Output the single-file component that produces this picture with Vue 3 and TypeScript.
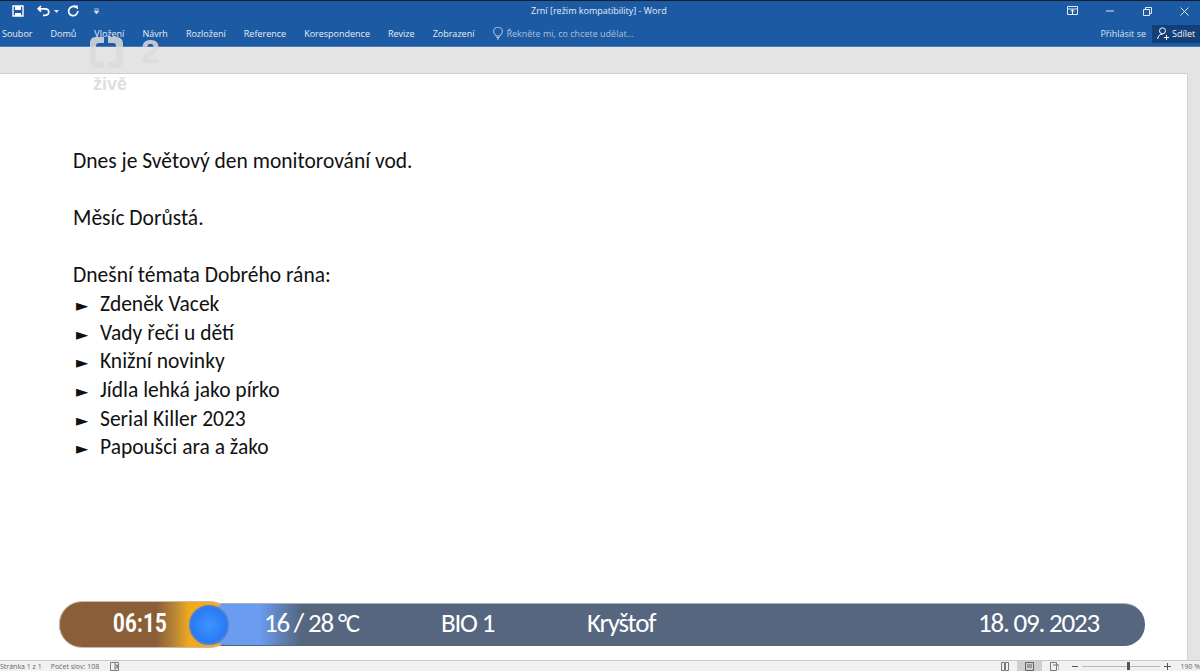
<script setup lang="ts">
const tabs: string[] = ['Soubor', 'Domů', 'Vložení', 'Návrh', 'Rozložení', 'Reference', 'Korespondence', 'Revize', 'Zobrazení']
const items: string[] = ['Zdeněk Vacek', 'Vady řeči u dětí', 'Knižní novinky', 'Jídla lehká jako pírko', 'Serial Killer 2023', 'Papoušci ara a žako']
</script>

<template>
  <div class="app">
    <header class="ribbon">
      <div class="titlerow">
        <div class="qat">
          <svg width="14" height="14" viewBox="0 0 14 14" class="save"><path d="M2 2h10v10H2z" fill="none" stroke="#fff" stroke-width="1.4"/><path d="M4 2h6v4H4z" fill="#fff"/><path d="M4 9h6v3H4z" fill="#fff"/></svg>
          <svg width="14" height="12" viewBox="0 0 14 12" class="undo"><path d="M4 1 1.2 3.8 4 6.6M1.5 3.8H8c5 0 5 6.5 0 6.5H6" fill="none" stroke="#fff" stroke-width="1.7"/></svg>
          <svg width="5" height="3" viewBox="0 0 5 3" class="caret"><path d="M0 0h5L2.5 3z" fill="#dfe8f5"/></svg>
          <svg width="12" height="12" viewBox="0 0 12 12" class="redo"><path d="M9.2 2.6A4.6 4.6 0 1 0 10.8 6" fill="none" stroke="#fff" stroke-width="1.7"/><path d="M6.2.6h4.6v4z" fill="#fff"/></svg>
          <svg width="5" height="6" viewBox="0 0 5 6" class="more"><path d="M0 1h5M0 3h5L2.5 6z" stroke="#cfdcf0" stroke-width=".8" fill="#cfdcf0"/></svg>
        </div>
        <div class="doctitle">Zrní [režim kompatibility] - Word</div>
        <div class="winctl">
          <svg width="11" height="10" viewBox="0 0 11 10" class="wopt"><path d="M.5.5h10v8H.5zM.5 3h10" fill="none" stroke="#dfe8f5"/><path d="M5.5 8V4M3.7 5.6 5.5 3.8l1.8 1.8" fill="none" stroke="#fff"/></svg>
          <svg width="9" height="2" viewBox="0 0 9 2" class="wmin"><path d="M0 1h8" stroke="#dfe8f5"/></svg>
          <svg width="9" height="9" viewBox="0 0 9 9" class="wmax"><path d="M.5 2.5h6v6h-6zM2.5 2.5v-2h6v6h-2" fill="none" stroke="#dfe8f5"/></svg>
          <svg width="9" height="9" viewBox="0 0 9 9" class="wclose"><path d="m.5.5 8 8M8.500.5l-8 8" stroke="#dfe8f5"/></svg>
        </div>
      </div>
      <div class="tabrow">
        <nav class="tabs"><span v-for="t in tabs" :key="t" class="tab">{{ t }}</span></nav>
        <div class="tell">
          <svg width="10" height="13" viewBox="0 0 10 13"><path d="M3 9C2.500 7.500.6 6.600.6 4.500a4.400 4.400 0 0 1 8.800 0C9.400 6.600 7.500 7.500 7 9zM3.500 10.500h3M4 12h2" fill="none" stroke="#cfdcf0" stroke-width=".9"/></svg>
          <span>Řekněte mi, co chcete udělat...</span>
        </div>
        <div class="account">
          <span class="login">Přihlásit se</span>
          <span class="share">
            <svg width="13" height="13" viewBox="0 0 13 13"><circle cx="5.500" cy="3.800" r="3" fill="none" stroke="#fff" stroke-width="1"/><path d="M.6 12c.3-3 2-4.800 4.900-4.800M9.500 8v5M7 10.500h5" fill="none" stroke="#fff" stroke-width="1"/></svg>
            Sdílet
          </span>
        </div>
      </div>
    </header>

    <main class="workspace">
      <section class="page">
        <p class="line">Dnes je Světový den monitorování vod.</p>
        <p class="line blank"></p>
        <p class="line">Měsíc Dorůstá.</p>
        <p class="line blank"></p>
        <p class="line">Dnešní témata Dobrého rána:</p>
        <p v-for="i in items" :key="i" class="line item"><span class="arrow">►</span>{{ i }}</p>
      </section>
    </main>

    <footer class="status">
      <div class="st-left">
        <span>Stránka 1 z 1</span><span>Počet slov: 108</span>
        <svg width="10" height="9" viewBox="0 0 10 9"><path d="M.5.5h8v8h-8zM5 .5v8M5.500 2l3 5M8.500 2l-3 5" fill="none" stroke="#666" stroke-width=".8"/></svg>
      </div>
      <div class="st-right">
        <svg width="8" height="9" viewBox="0 0 8 9"><path d="M.5.500h3v8h-3zM4.500.500h3v8h-3z" fill="none" stroke="#777"/></svg>
        <span class="viewbtn"><svg width="9" height="9" viewBox="0 0 9 9"><path d="M.5.500h8v8h-8z" fill="none" stroke="#666"/><path d="M2 3h5M2 5h5" stroke="#666"/></svg></span>
        <svg width="9" height="9" viewBox="0 0 9 9"><path d="M.5.500h6v8h-6zM3 3h6v5" fill="none" stroke="#777"/></svg>
        <span class="zoomctl"><i class="minus"></i><span class="slider"><b></b></span><i class="plus"></i></span>
        <span class="pct">190 %</span>
      </div>
    </footer>

    <!-- TV broadcast overlays -->
    <div class="logo">
      <svg width="78" height="36" viewBox="0 0 78 36"><path d="M16 2H8C3 2 2 5 2 9v16c0 5 2 8 7 8h7v-6h-5c-2 0-3-1-3-3V11c0-2 1-3 3-3h5zM20 2h8c5 0 7 3 7 7v16c0 5-2 8-7 8h-8v-6h5c2 0 3-1 3-3V11c0-2-1-3-3-3h-5z" fill="#dcdcdc" opacity=".85"/><text x="53" y="28" class="logo2">2</text></svg>
      <div class="live">živě</div>
    </div>
    <div class="tvbar">
      <div class="clock"><span>06:15</span></div>
      <div class="orb"></div>
      <div class="glow"></div>
      <span class="tv temp">16 / 28 °C</span>
      <span class="tv bio">BIO 1</span>
      <span class="tv name">Kryštof</span>
      <span class="tv date">18. 09. 2023</span>
    </div>
  </div>
</template>

<style>
html, body { margin: 0; padding: 0; background: #fff; }
</style>

<style scoped>
.app { position: relative; width: 1200px; height: 671px; overflow: hidden; display: flex; flex-direction: column; font-family: "Open Sans", "Noto Sans", sans-serif; }
.ribbon { height: 46.500px; flex: none; background: #1c5aa3; color: #eaf0f8; border-top: 1px solid #141d2b; box-sizing: border-box; border-bottom: 1px solid #4a7bb8; }
.titlerow { height: 20px; display: flex; align-items: center; position: relative; }
.qat { display: flex; align-items: center; padding-left: 11px; }
.undo { margin-left: 12px; }
.caret { margin-left: 3px; }
.redo { margin-left: 8px; }
.more { margin-left: 15px; }
.doctitle { position: absolute; left: 531px; top: 3px; font-size: 9px; line-height: 14px; color: #e8eef7; white-space: nowrap; }
.winctl { margin-left: auto; display: flex; align-items: center; padding-right: 11px; }
.wmin { margin-left: 28px; }
.wmax { margin-left: 28px; }
.wclose { margin-left: 28px; }
.tabrow { height: 25px; display: flex; align-items: center; position: relative; }
.tabs { display: flex; padding-left: 2px; font-size: 9px; color: #e6edf7; white-space: nowrap; }
.tab { margin-right: 18px; }
.tab:first-child { margin-right: 18px; }
.tell { display: flex; align-items: center; gap: 3px; margin-left: 1px; font-size: 9px; color: #a9c0de; white-space: nowrap; }
.account { margin-left: auto; display: flex; align-items: center; font-size: 9px; white-space: nowrap; }
.login { color: #dbe5f3; margin-right: 6px; }
.share { display: flex; align-items: center; gap: 2px; width: 48px; height: 18px; box-sizing: border-box; padding-left: 5px; background: #133f77; color: #f0f4fa; }
.workspace { flex: 1; background: #e4e4e4; padding: 26px 12px 0 0; display: flex; min-height: 0; }
.page { flex: 1; background: #fff; border-top: 1px solid #cfcfcf; border-right: 1px solid #d2d2d2; padding: 73px 0 0 73px; margin-bottom: -2px; box-sizing: border-box; font-family: Carlito, Lato, sans-serif; color: #111; height: 594px; }
.line { margin: 0; font-size: 21.500px; line-height: 28.700px; height: 28.700px; white-space: nowrap; }
.arrow { display: inline-block; width: 27px; font-family: "DejaVu Sans", sans-serif; font-size: 16px; padding-left: 3px; box-sizing: border-box; }
.status { height: 10px; flex: none; background: #f1f1f1; border-top: 1px solid #c8c8c8; display: flex; justify-content: space-between; align-items: center; font-size: 7px; color: #666; overflow: hidden; }
.st-left { display: flex; align-items: center; gap: 9px; padding-left: 0; }
.st-left svg { margin-left: 2px; }
.st-right { display: flex; align-items: center; gap: 9px; margin-right: 0; }
.viewbtn { width: 25px; height: 10px; background: #cfcfcf; display: flex; justify-content: center; align-items: center; margin: 0 -1px; }
.zoomctl { display: flex; align-items: center; gap: 4px; margin-left: 4px; }
.minus { width: 6px; height: 1px; background: #555; }
.plus { width: 7px; height: 7px; background: linear-gradient(#555, #555) center/7px 1px no-repeat, linear-gradient(#555, #555) center/1px 7px no-repeat; }
.slider { width: 78px; height: 1px; background: #bbb; position: relative; display: block; }
.slider b { position: absolute; left: 45px; top: -4px; width: 3px; height: 8px; background: #555; }
.pct { white-space: nowrap; }
.logo { position: absolute; left: 88px; top: 35px; width: 90px; height: 60px; }
.logo svg { display: block; }
.logo2 { font: 700 34px "Liberation Sans", sans-serif; fill: #dcdcdc; opacity: .85; }
.live { position: absolute; left: 5px; top: 39px; font: 700 18px/20px "Liberation Sans", sans-serif; color: #dedede; }
.tvbar { position: absolute; left: 59px; top: 603px; width: 1086px; height: 43px; border-radius: 21px; background: #56667f; border-top: 1px solid #aab1bd; box-sizing: border-box; color: #fff; }
.clock { position: absolute; left: 0; top: -3px; width: 174px; height: 47px; border-radius: 23px; background: linear-gradient(90deg, #8a5f38 0 56%, #b08038 65%, #f0a820 75%, #f7ad20 100%); overflow: hidden; border: 1px solid #c9bba9; box-sizing: border-box; }
.clock span { position: absolute; left: 53px; top: 5px; font: 700 25px/34px "Roboto", sans-serif; letter-spacing: .3px; color: #fff; transform: scaleX(.82); transform-origin: left; }
.glow { position: absolute; left: 150px; top: 0; width: 92px; height: 41px; background: linear-gradient(90deg, #6a9cf0 0 55%, #56667f 100%); z-index: 0; border-radius: 18px 0 0 18px; }
.orb { position: absolute; left: 130px; top: 1px; width: 36px; height: 36px; border-radius: 50%; background: radial-gradient(circle, #3e95ff 0, #2b7df5 60%, #2a70dc 85%); border: 2px solid #4b80d8; z-index: 2; }
.tv { position: absolute; top: 2px; font-family: Carlito, Lato, sans-serif; font-size: 27px; line-height: 34px; letter-spacing: -1.2px; white-space: nowrap; z-index: 3; }
.temp { left: 205px; }
.bio { left: 382px; }
.name { left: 528px; }
.date { left: 919px; }
</style>
